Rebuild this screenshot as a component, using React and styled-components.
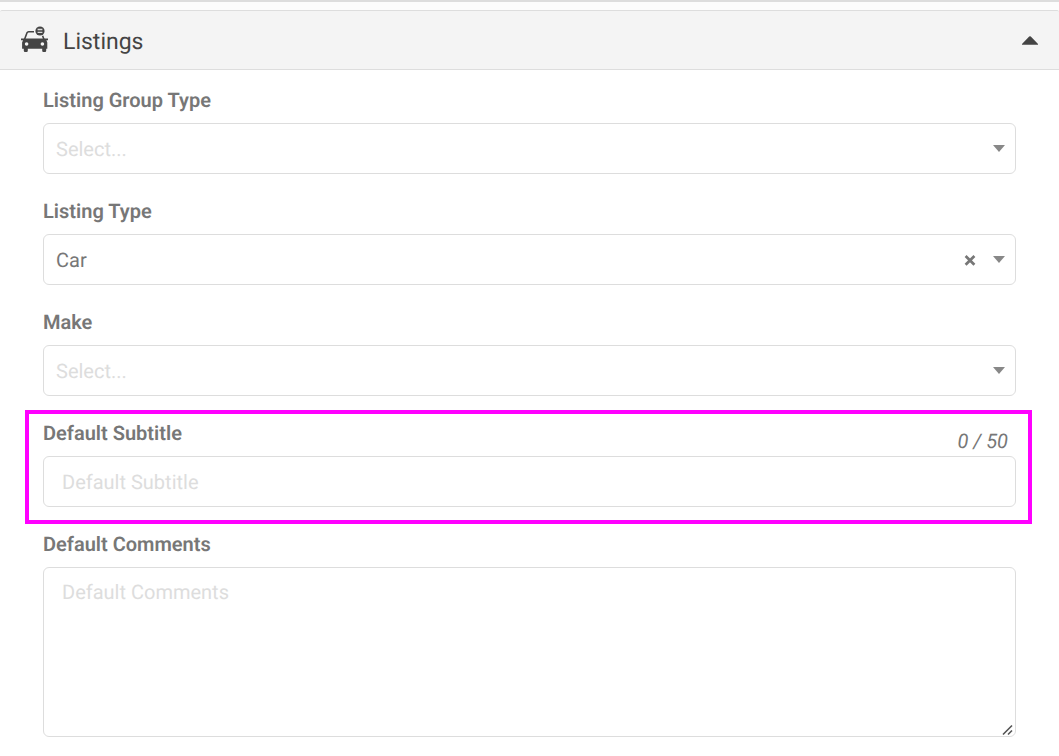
import React, { useState } from "react";
import styled, { createGlobalStyle, css } from "styled-components";

const GlobalStyle = createGlobalStyle`
  *, *::before, *::after { box-sizing: border-box; }
  body {
    margin: 0;
    background: #fff;
    color: #777;
    font-family: Roboto, "Liberation Sans", sans-serif;
    font-size: 20px;
    line-height: 24px;
    text-rendering: geometricPrecision;
  }
`;

const TopStrip = styled.div`
  height: 10px;
  background: #fcfcfc;
  border-top: 2px solid #ddd;
`;

const PanelHeader = styled.button`
  display: flex;
  align-items: center;
  gap: 15px;
  width: 100%;
  height: 60px;
  padding: 0 20px;
  border: solid #ddd;
  border-width: 1px 0;
  border-radius: 2px 2px 0 0;
  background: #f4f4f4;
  color: #444;
  font: inherit;
  text-align: left;
  text-rendering: inherit;
  cursor: pointer;
`;

const PanelTitle = styled.span`
  flex: 1;
  padding-top: 4px;
  font-size: 23px;
  line-height: 28px;
`;

const CarIcon = styled.svg`
  width: 28px;
  height: 28px;
`;

const HeaderCaret = styled.svg`
  width: 18px;
  height: 10px;
  transform: ${(p) => (p.$open ? "none" : "rotate(180deg)")};
`;

const Form = styled.form`
  display: flex;
  flex-direction: column;
  gap: 25px;
  padding: 18px 43px 19px;
`;

const Field = styled.div`
  display: flex;
  flex-direction: column;
  ${(p) =>
    p.$highlight &&
    css`
      margin: -11px -16px -17px -18px;
      padding: 7px 12px 13px 14px;
      border: 4px solid #f0f;
    `}
`;

const LabelRow = styled.div`
  display: flex;
  justify-content: space-between;
  height: 35px;
`;

const Label = styled.label`
  font-weight: 600;
`;

const Counter = styled.span`
  padding: 8px 8px 0 0;
  font-style: italic;
`;

const boxStyle = css`
  display: block;
  width: 100%;
  border: 1px solid #ddd;
  border-radius: 6px;
  background: #fff;
  color: #777;
  font: inherit;
  text-rendering: inherit;
  outline-color: #aaa;
  &::placeholder { color: #ddd; opacity: 1; }
`;

const Overlay = styled.div`
  display: grid;
  align-items: center;
  > * { grid-area: 1 / 1; }
`;

const Select = styled.select`
  ${boxStyle}
  appearance: none;
  height: 51px;
  padding: 0 60px 0 12px;
  color: ${(p) => (p.$empty ? "#ddd" : "#777")};
`;

const Indicators = styled.div`
  display: flex;
  justify-self: end;
  align-items: center;
  gap: 16px;
  padding-right: 10px;
  pointer-events: none;
`;

const ClearButton = styled.button`
  display: flex;
  padding: 0;
  border: 0;
  background: none;
  color: #777;
  cursor: pointer;
  pointer-events: auto;
`;

const SelectCaret = styled.svg`
  width: 14px;
  height: 8px;
  color: #888;
`;

const TextInput = styled.input`
  ${boxStyle}
  height: 51px;
  padding: 0 18px;
`;

const TextArea = styled.textarea`
  ${boxStyle}
  height: 170px;
  padding: 12px 18px;
  resize: vertical;
  &::-webkit-resizer { background: transparent; }
`;

const Grip = styled.svg`
  place-self: end;
  width: 12px;
  height: 12px;
  margin: 0 2px 1px 0;
  color: #555;
  pointer-events: none;
`;

function SelectField({ id, label, options, initial = "" }) {
  const [value, setValue] = useState(initial);
  return (
    <Field>
      <LabelRow>
        <Label htmlFor={id}>{label}</Label>
      </LabelRow>
      <Overlay>
        <Select id={id} value={value} $empty={!value} onChange={(e) => setValue(e.target.value)}>
          <option value="">Select...</option>
          {options.map((o) => (
            <option key={o}>{o}</option>
          ))}
        </Select>
        <Indicators>
          {value && (
            <ClearButton type="button" aria-label={`Clear ${label}`} onClick={() => setValue("")}>
              <svg width="12" height="12" viewBox="0 0 12 12" aria-hidden="true">
                <path d="M1.6 2l8.8 8.8M10.4 2l-8.8 8.8" stroke="currentColor" strokeWidth="2.7" />
              </svg>
            </ClearButton>
          )}
          <SelectCaret viewBox="0 0 14 8" aria-hidden="true">
            <path d="M1 0h12L7 7z" fill="currentColor" />
          </SelectCaret>
        </Indicators>
      </Overlay>
    </Field>
  );
}

export default function App() {
  const [open, setOpen] = useState(true);
  const [subtitle, setSubtitle] = useState("");
  return (
    <>
      <GlobalStyle />
      <TopStrip />
      <PanelHeader type="button" aria-expanded={open} onClick={() => setOpen(!open)}>
        <CarIcon viewBox="0 0 28 28" aria-hidden="true">
          <path d="M4.5 13.5L7 6.8Q7.4 5.8 8.6 5.8H14M22.6 9.8L24 13.5" fill="none" stroke="currentColor" strokeWidth="1.6" />
          <path
            fillRule="evenodd"
            fill="currentColor"
            d="M1 12.6h27v1.6h-1.6l.9 2.4v6.2h-1.1v2q0 1.2-1.2 1.2h-1.6q-1.2 0-1.2-1.2v-2H7.8v2q0 1.2-1.2 1.2H5q-1.2 0-1.2-1.2v-2H2.1v-6.2l.9-2.4H1zM6.6 16.2a1.8 1.8 0 1 0 0 3.6a1.8 1.8 0 1 0 0-3.6zM22.4 16.2a1.8 1.8 0 1 0 0 3.6a1.8 1.8 0 1 0 0-3.6z"
          />
          <circle cx="20" cy="5" r="4.6" fill="currentColor" />
          <path d="M17.6 3.5h4.8M17.6 6.4h4.8" stroke="#ddd" strokeWidth="1.3" />
        </CarIcon>
        <PanelTitle>Listings</PanelTitle>
        <HeaderCaret $open={open} viewBox="0 0 18 10" aria-hidden="true">
          <path d="M1 9.8Q.8 9.2 1.2 8.8L8.2 1.6Q9 1 9.8 1.6L16.8 8.8Q17.2 9.2 17 9.8z" fill="currentColor" />
        </HeaderCaret>
      </PanelHeader>
      {open && (
        <Form>
          <SelectField id="group" label="Listing Group Type" options={["Vehicles"]} />
          <SelectField id="type" label="Listing Type" options={["Car"]} initial="Car" />
          <SelectField id="make" label="Make" options={["Ford"]} />
          <Field $highlight>
            <LabelRow>
              <Label htmlFor="subtitle">Default Subtitle</Label>
              <Counter>{subtitle.length} / 50</Counter>
            </LabelRow>
            <TextInput
              id="subtitle"
              maxLength={50}
              placeholder="Default Subtitle"
              value={subtitle}
              onChange={(e) => setSubtitle(e.target.value)}
            />
          </Field>
          <Field>
            <LabelRow>
              <Label htmlFor="comments">Default Comments</Label>
            </LabelRow>
            <Overlay>
              <TextArea id="comments" placeholder="Default Comments" />
              <Grip viewBox="0 0 12 12" aria-hidden="true">
                <path d="M1 10.5L10 1.5M6 10.5L10 6.5" stroke="currentColor" strokeWidth="1.6" />
              </Grip>
            </Overlay>
          </Field>
        </Form>
      )}
    </>
  );
}
